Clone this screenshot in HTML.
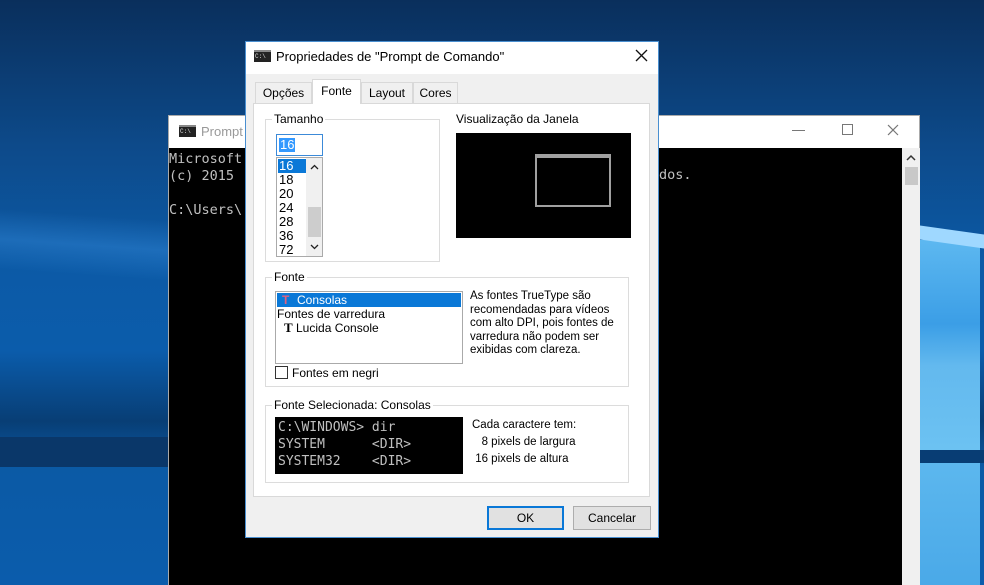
<!DOCTYPE html>
<html><head><meta charset="utf-8"><style>
*{margin:0;padding:0;box-sizing:border-box}
body{width:984px;height:585px;overflow:hidden;position:relative;font-family:"Liberation Sans",sans-serif;font-size:12px;color:#000;
background:linear-gradient(180deg,#0a2f5c 0%,#0d4a8a 25%,#0c5aa6 45%,#0b5cab 60%,#083e75 72%,#0b5aa5 80%,#0b5cac 100%)}
.a{position:absolute}
.mono{font-family:"DejaVu Sans Mono","Liberation Mono",monospace}
.grp{position:absolute;border:1px solid #dcdcdc}
.lbl{position:absolute;top:-8px;left:8px;background:#fff;padding:0 2px;font-size:12px}
.icon{position:absolute;width:17px;height:12px;background:#222;border-top:2px solid #888;color:#ddd;font-size:6px;line-height:9px;padding-left:1px;font-family:"Liberation Mono",monospace}
</style></head><body>
<div class="a" style="left:0;top:215px;width:170px;height:60px;background:linear-gradient(180deg,rgba(40,120,210,0),rgba(50,135,215,.45),rgba(40,120,210,0));transform:skewY(4deg)"></div>
<div class="a" style="left:0;top:437px;width:170px;height:30px;background:#0a3769"></div>
<div class="a" style="left:920px;top:240px;width:60px;height:210px;background:linear-gradient(180deg,#5db8f0,#3b9ee6 40%,#63b9ee 60%,#6cc2f2)"></div>
<div class="a" style="left:920px;top:230px;width:64px;height:14px;background:#9fd8ff;transform:skewY(8deg)"></div>
<div class="a" style="left:920px;top:463px;width:60px;height:122px;background:linear-gradient(180deg,#5cb7ee,#4aa9e8)"></div>
<div class="a" style="left:920px;top:450px;width:64px;height:13px;background:#083d74"></div>

<div class="a" style="left:168px;top:115px;width:752px;height:470px;background:#fff;border:1px solid #aaa"></div>
<div class="icon" style="left:179px;top:125px">C:\</div>
<div class="a" style="left:201px;top:124px;color:#999;font-size:13px">Prompt</div>
<div class="a" style="left:792px;top:130px;width:13px;height:1px;background:#777"></div>
<div class="a" style="left:842px;top:124px;width:11px;height:11px;border:1px solid #777"></div>
<svg class="a" style="left:887px;top:124px" width="12" height="12"><path d="M1 1L11 11M11 1L1 11" stroke="#777" stroke-width="1.2"/></svg>
<div class="a" style="left:169px;top:148px;width:733px;height:437px;background:#000"></div>
<div class="a" style="left:902px;top:148px;width:18px;height:437px;background:#f0f0f0"></div>
<svg class="a" style="left:906px;top:154px" width="10" height="7"><path d="M1 6L5 2L9 6" stroke="#333" stroke-width="1.5" fill="none"/></svg>
<div class="a" style="left:905px;top:167px;width:13px;height:18px;background:#c8c8c8"></div>
<div class="a mono" style="left:169px;top:151px;color:#c0c0c0;font-size:13.5px;line-height:17px;white-space:pre">Microsoft
(c) 2015

C:\Users\</div>
<div class="a mono" style="left:659px;top:167px;color:#c0c0c0;font-size:13.5px">dos.</div>

<div class="a" style="left:245px;top:41px;width:414px;height:497px;background:#f0f0f0;border:1px solid #4a8fd0"></div>
<div class="a" style="left:246px;top:42px;width:412px;height:32px;background:#fff"></div>
<div class="icon" style="left:254px;top:50px">C:\</div>
<div class="a" style="left:276px;top:49px;font-size:13px">Propriedades de "Prompt de Comando"</div>
<svg class="a" style="left:635px;top:49px" width="13" height="13"><path d="M1 1L12 12M12 1L1 12" stroke="#111" stroke-width="1.3"/></svg>
<div class="a" style="left:255px;top:82px;width:57px;height:21px;border:1px solid #d9d9d9;border-bottom:0;background:#f0f0f0;text-align:center;line-height:20px">Opções</div>
<div class="a" style="left:312px;top:79px;width:49px;height:25px;border:1px solid #d9d9d9;border-bottom:0;background:#fff;text-align:center;line-height:22px;z-index:2">Fonte</div>
<div class="a" style="left:361px;top:82px;width:52px;height:21px;border:1px solid #d9d9d9;border-bottom:0;background:#f0f0f0;text-align:center;line-height:20px">Layout</div>
<div class="a" style="left:413px;top:82px;width:45px;height:21px;border:1px solid #d9d9d9;border-bottom:0;background:#f0f0f0;text-align:center;line-height:20px">Cores</div>
<div class="a" style="left:253px;top:103px;width:397px;height:394px;background:#fff;border:1px solid #d9d9d9"></div>

<div class="grp" style="left:265px;top:119px;width:175px;height:143px"><span class="lbl" style="left:6px">Tamanho</span></div>
<div class="a" style="left:276px;top:134px;width:47px;height:22px;border:1px solid #3c8ad8;background:#fff"><span style="position:absolute;left:2px;top:3px;background:#3399ff;color:#fff;font-size:13px;line-height:14px;padding:0 1px">16</span></div>
<div class="a" style="left:276px;top:157px;width:47px;height:100px;border:1px solid #aaa;background:#fff;font-size:13px;line-height:14px">
 <div style="position:absolute;left:1px;top:1px;width:28px;background:#0a78d7;color:#fff;padding-left:1px">16</div>
 <div style="position:absolute;left:2px;top:15px">18<br>20<br>24<br>28<br>36<br>72</div>
 <div style="position:absolute;left:29px;top:0;width:16px;height:98px;background:#f0f0f0"></div>
 <div style="position:absolute;left:31px;top:49px;width:13px;height:30px;background:#cdcdcd"></div>
 <svg style="position:absolute;left:33px;top:6px" width="9" height="6"><path d="M1 5L4.5 1.5L8 5" stroke="#222" stroke-width="1.3" fill="none"/></svg>
 <svg style="position:absolute;left:33px;top:86px" width="9" height="6"><path d="M1 1L4.5 4.5L8 1" stroke="#222" stroke-width="1.3" fill="none"/></svg>
</div>
<div class="a" style="left:456px;top:112px">Visualização da Janela</div>
<div class="a" style="left:456px;top:133px;width:175px;height:105px;background:#000"></div>
<div class="a" style="left:535px;top:154px;width:76px;height:53px;border:2px solid #a0a0a0;border-top:4px solid #a0a0a0"></div>

<div class="grp" style="left:265px;top:277px;width:364px;height:110px"><span class="lbl" style="left:6px">Fonte</span></div>
<div class="a" style="left:275px;top:291px;width:188px;height:73px;border:1px solid #aaa;background:#fff;font-size:12px;line-height:14px">
 <div style="position:absolute;left:1px;top:1px;width:184px;height:14px;background:#0a78d7;color:#fff;padding-left:20px">Consolas<span style="position:absolute;left:5px;color:#e06080;font-weight:bold">T</span></div>
 <div style="position:absolute;left:1px;top:15px">Fontes de varredura</div>
 <div style="position:absolute;left:8px;top:29px"><b style="font-family:'Liberation Serif',serif;font-size:13px">T</b> Lucida Console</div>
</div>
<div class="a" style="left:275px;top:366px;width:13px;height:13px;border:1px solid #333;background:#fff"></div>
<div class="a" style="left:292px;top:366px">Fontes em negri</div>
<div class="a" style="left:470px;top:290px;font-size:11.5px;line-height:13.6px">As fontes TrueType são<br>recomendadas para vídeos<br>com alto DPI, pois fontes de<br>varredura não podem ser<br>exibidas com clareza.</div>

<div class="grp" style="left:265px;top:405px;width:364px;height:78px"><span class="lbl" style="left:6px">Fonte Selecionada: Consolas</span></div>
<div class="a mono" style="left:275px;top:417px;width:188px;height:57px;background:#000;color:#c0c0c0;font-size:13px;line-height:17px;padding:2px 3px;white-space:pre">C:\WINDOWS&gt; dir
SYSTEM      &lt;DIR&gt;
SYSTEM32    &lt;DIR&gt;</div>
<div class="a" style="left:472px;top:417px;font-size:11.5px;line-height:17px">Cada caractere tem:<br>&nbsp;&nbsp;&nbsp;8 pixels de largura<br>&nbsp;16 pixels de altura</div>

<div class="a" style="left:487px;top:506px;width:77px;height:24px;border:2px solid #0a78d7;background:#e1e1e1;text-align:center;line-height:20px">OK</div>
<div class="a" style="left:573px;top:506px;width:78px;height:24px;border:1px solid #adadad;background:#e1e1e1;text-align:center;line-height:22px">Cancelar</div>
</body></html>
